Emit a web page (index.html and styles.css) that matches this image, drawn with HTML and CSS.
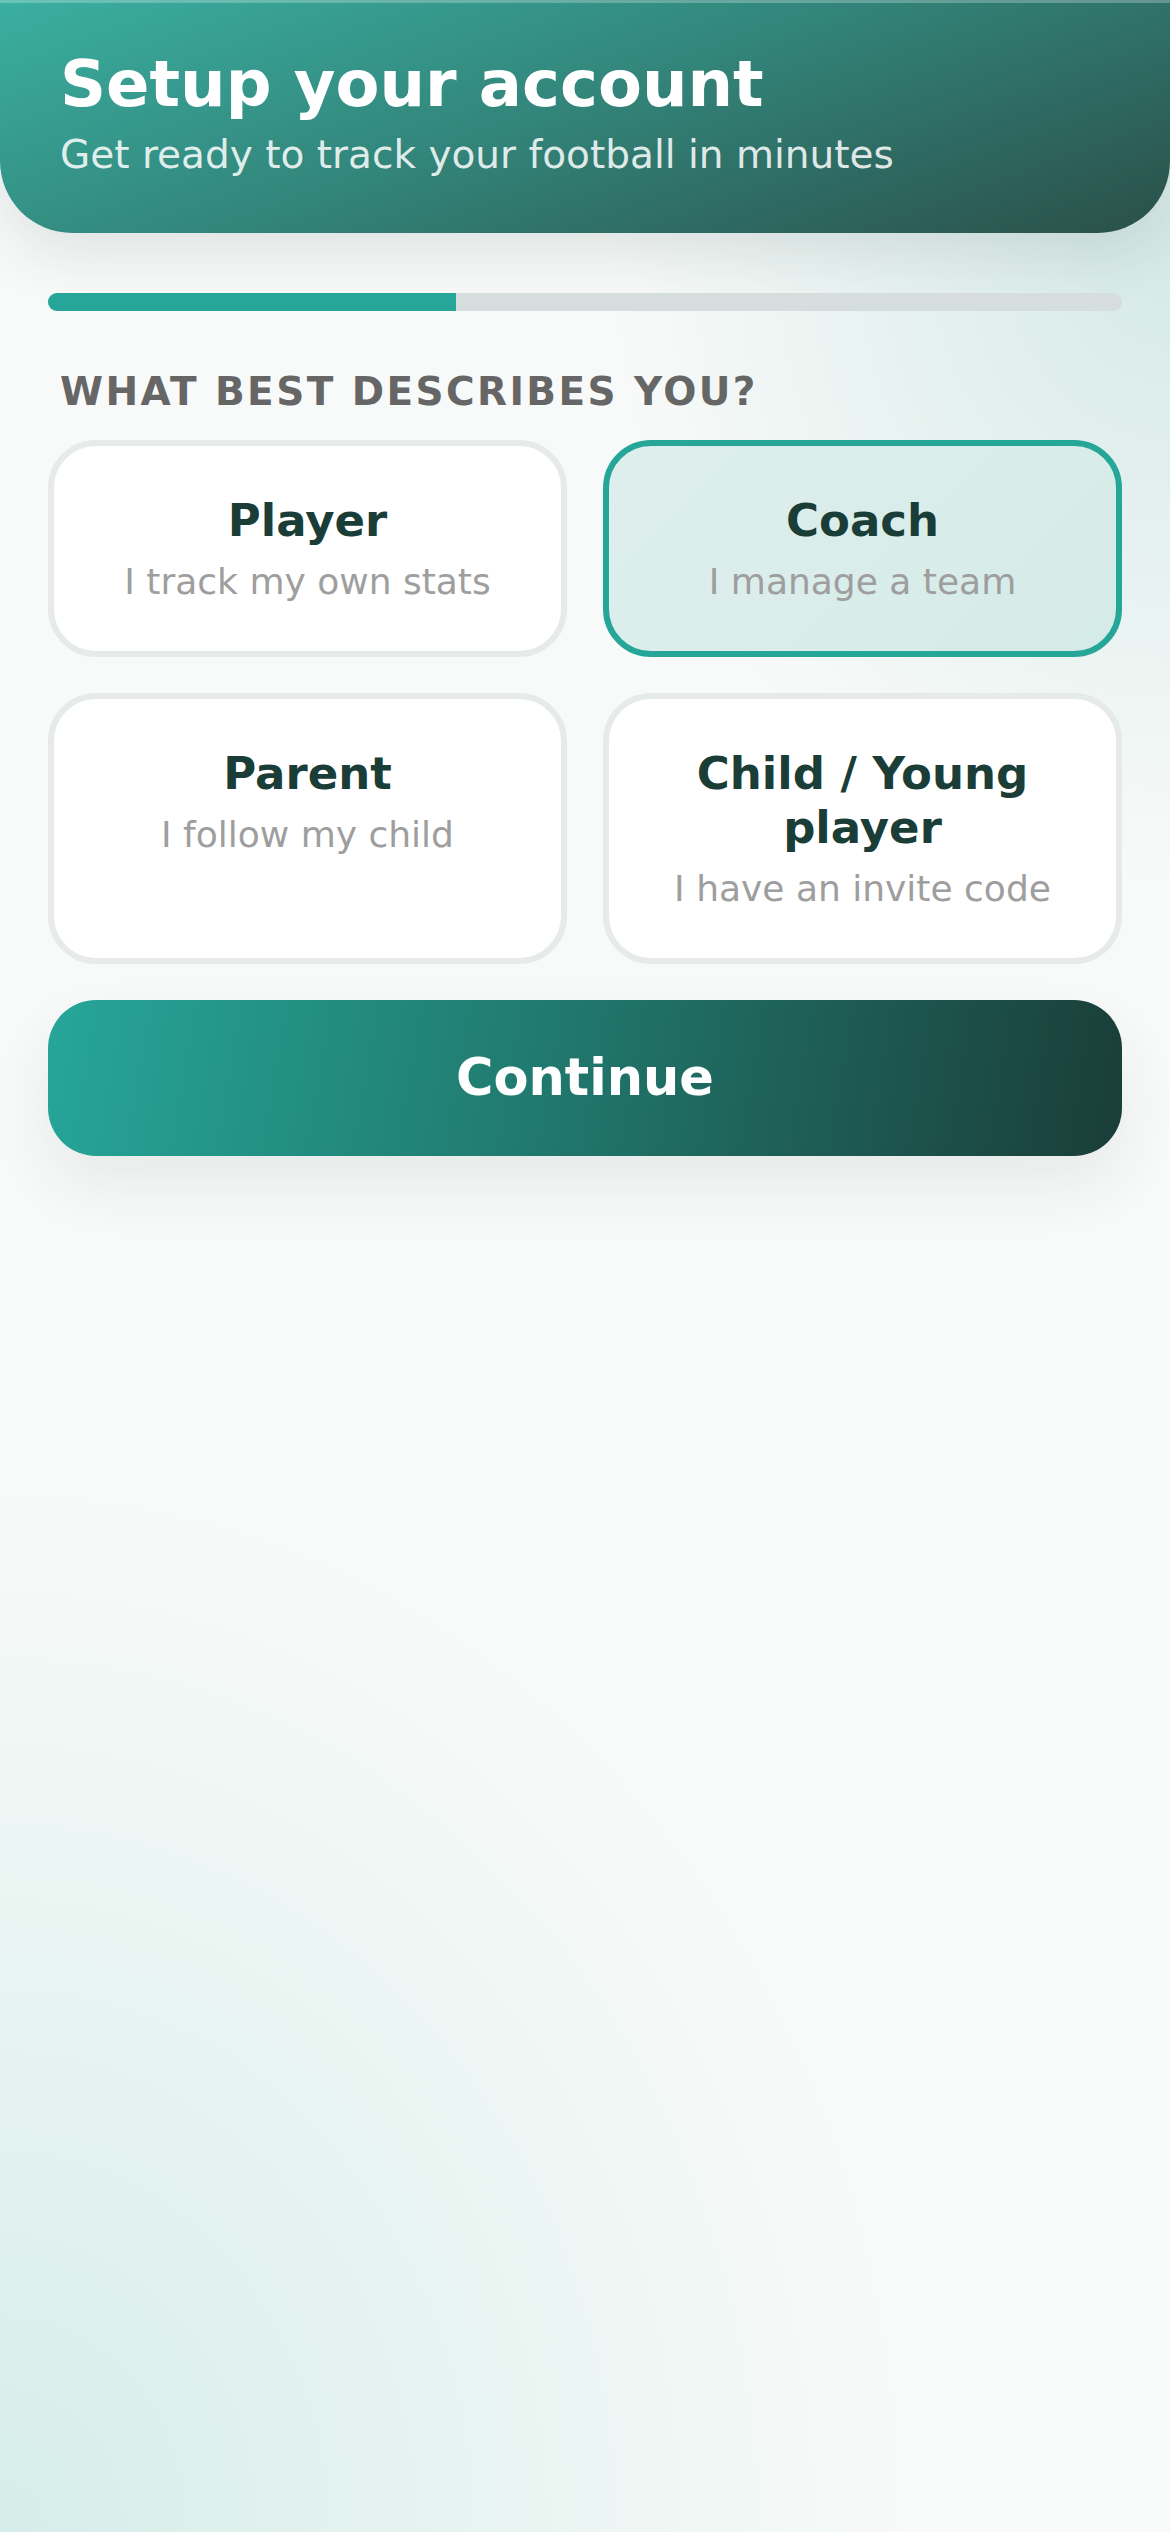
FILE: index.html
```html
<!DOCTYPE html>
<html lang="en">
  <head>
    <title>Setup your account</title>
    <link rel="stylesheet" href="styles.css">
  </head>
  <body>
    <header class="top">
      <h1 class="top-title">Setup your account</h1>
      <p class="top-sub">Get ready to track your football in minutes</p>
    </header>
    <main class="setup">
      <div class="progress">
        <div class="progress-fill"></div>
      </div>
      <h2 class="section-label">What best describes you?</h2>
      <div class="roles">
        <div class="role">
          <div class="role-name">Player</div>
          <div class="role-desc">I track my own stats</div>
        </div>
        <div class="role selected">
          <div class="role-name">Coach</div>
          <div class="role-desc">I manage a team</div>
        </div>
        <div class="role">
          <div class="role-name">Parent</div>
          <div class="role-desc">I follow my child</div>
        </div>
        <div class="role">
          <div class="role-name">Child / Young player</div>
          <div class="role-desc">I have an invite code</div>
        </div>
      </div>
      <button class="continue">Continue</button>
    </main>
  </body>
</html>
```

FILE: styles.css
```css
html {
  background: #f8faf9;
}

body {
  margin: 0;
  min-height: 2532px;
  font-family: "DejaVu Sans", sans-serif;
  background:
    radial-gradient(ellipse 1300px 1500px at 0% 100%, rgba(205, 234, 229, 0.8), rgba(205, 234, 229, 0) 70%),
    radial-gradient(ellipse 800px 900px at 100% 10%, rgba(205, 230, 226, 0.8), rgba(205, 230, 226, 0) 70%),
    #f8faf9;
}

.top {
  padding: 46px 60px 54px;
  border-radius: 0 0 72px 72px;
  background: linear-gradient(160deg, #3aafa1 0%, #33877c 45%, #2a4f49 100%);
  box-shadow: inset 0 3px 0 rgba(255, 255, 255, 0.25), 0 20px 60px rgba(30, 60, 55, 0.12);
  color: #fff;
}

.top-title {
  margin: 0;
  font-size: 64px;
  line-height: 1.2;
  font-weight: bold;
}

.top-sub {
  margin: 9px 0 0;
  font-size: 39px;
  line-height: 1.2;
  color: rgba(255, 255, 255, 0.86);
}

.setup {
  padding: 60px 48px 0;
}

.progress {
  height: 18px;
  border-radius: 9px;
  background: #d5dedc;
  overflow: hidden;
}

.progress-fill {
  width: 38%;
  height: 100%;
  background: #26a699;
}

.section-label {
  margin: 58px 0 26px 12px;
  font-size: 39px;
  line-height: 45px;
  font-weight: bold;
  letter-spacing: 2.4px;
  text-transform: uppercase;
  color: #666;
}

.roles {
  display: grid;
  grid-template-columns: 1fr 1fr;
  gap: 36px;
}

.role {
  padding: 48px 24px;
  border: 6px solid #e6eaea;
  border-radius: 48px;
  background: #fff;
  text-align: center;
}

.role.selected {
  border-color: #26a699;
  background: linear-gradient(135deg, #deefed, #d5ebe7);
}

.role-name {
  font-size: 45px;
  line-height: 54px;
  font-weight: bold;
  color: #1a3d37;
}

.role-desc {
  margin-top: 12px;
  font-size: 36px;
  line-height: 43px;
  color: #9e9e9e;
}

.continue {
  display: block;
  width: 100%;
  height: 156px;
  margin-top: 36px;
  border: 0;
  border-radius: 48px;
  background: linear-gradient(100deg, #26a699 0%, #217a6f 45%, #1a3d38 100%);
  box-shadow: 0 30px 60px rgba(30, 50, 45, 0.08);
  font-family: "DejaVu Sans", sans-serif;
  font-size: 51px;
  font-weight: bold;
  color: #fff;
}
```
